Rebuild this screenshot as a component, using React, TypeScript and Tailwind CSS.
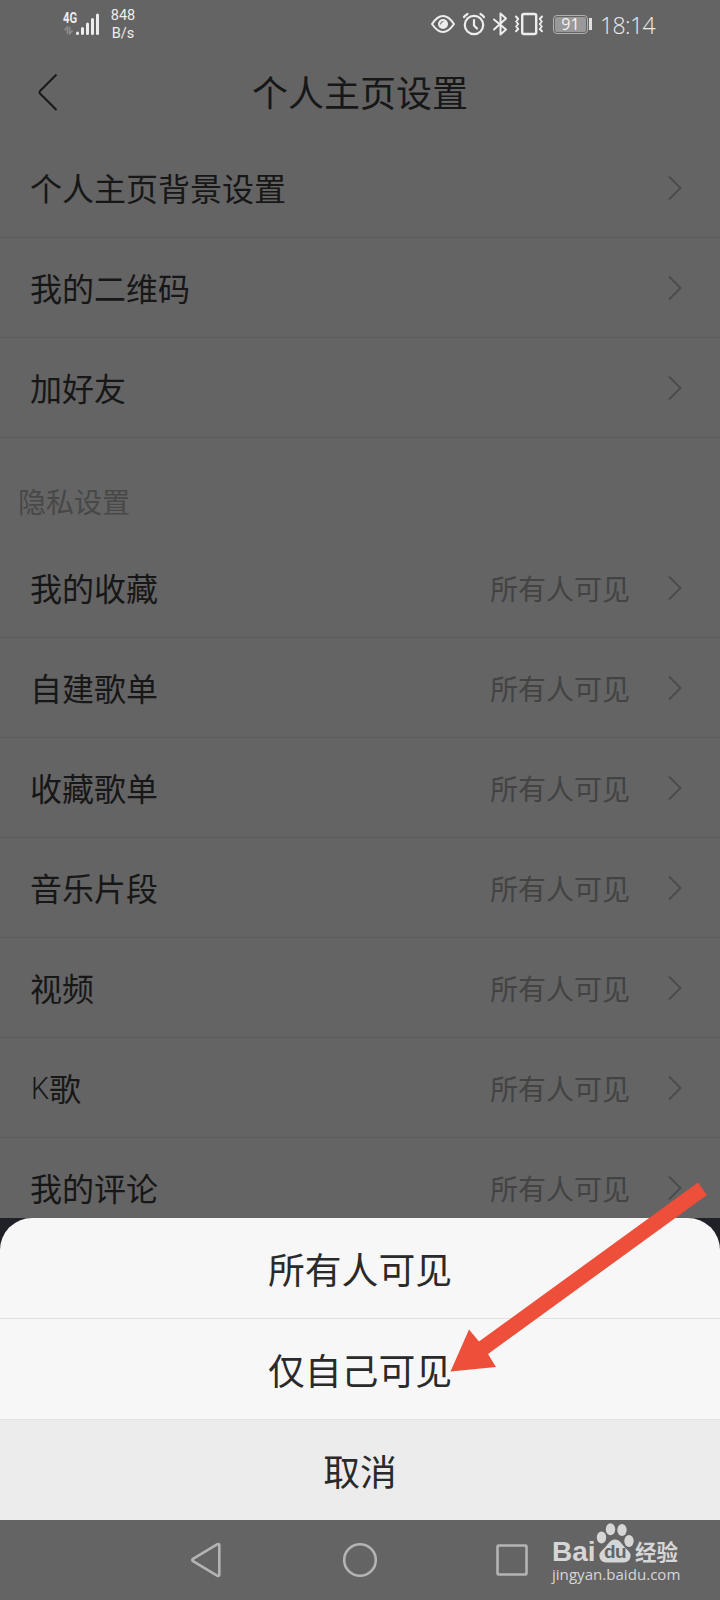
const Chevron = () => (
  <svg className="h-[26px] w-[14px] shrink-0" viewBox="0 0 14 26" fill="none" stroke="#4b4b4b" strokeWidth="1.9">
    <path d="M1 1.5 12.5 13 1 24.5" />
  </svg>
);

const Row = ({ label, value }: { label: string; value?: string }) => (
  <div className="flex h-[100px] shrink-0 items-center border-b border-[#5b5b5b] pr-[38px] pl-[30px]">
    <span className="flex grow items-center pb-[2px] text-[32px] leading-[48px] text-[#171717]">
      {label.startsWith("K") ? (
        <>
          <span className="ml-[1px] inline-block w-[18px] origin-left scale-x-90 pt-[2px] font-['Roboto'] font-light">K</span>
          <span>{label.slice(1)}</span>
        </>
      ) : (
        label
      )}
    </span>
    {value && <span className="mr-[38px] pt-[1px] text-[28px] leading-[40px] text-[#434343]">{value}</span>}
    <Chevron />
  </div>
);

const StatusBar = () => (
  <div className="flex h-12 shrink-0 items-center pr-[64px] pl-[63px] text-[#ededed]">
    <div className="flex h-[24px] w-[38px] gap-0">
      <div className="flex w-[13px] flex-col">
        <span className="w-[13px] origin-left scale-x-[.8] font-['Roboto'] text-[14px] leading-[12px] font-bold">4G</span>
        <svg className="mt-[2px] h-[9px] w-[11px]" viewBox="0 0 11 10" fill="none" stroke="#8c8c8c" strokeWidth="1.8">
          <path d="M4.3 9V1.2L1 4.5M6.8.8V8.5L10 5" />
        </svg>
      </div>
      <svg className="h-[24px] w-[24px]" viewBox="0 0 24 24" stroke="currentColor" strokeWidth="3" strokeLinecap="round">
        <path d="M1.5 21v.5M6.5 16.5v5M11.5 12v9.5M16.5 7.5v14M21.5 3v18.5" />
      </svg>
    </div>
    <div className="ml-[9px] w-[26px] pt-[2px] text-center font-['Roboto'] text-[14.5px] leading-[18px]">
      <div>848</div>
      <div>B/s</div>
    </div>
    <div className="grow" />
    <svg className="h-[24px] w-[114px]" viewBox="430 12 114 24" fill="none" stroke="currentColor" strokeWidth="2" strokeLinecap="round" strokeLinejoin="round">
      <path d="M432 24C436 18 439 16 443 16S450 18 454 24C450 30 447 32 443 32S436 30 432 24Z" />
      <circle cx="443" cy="24" r="5" fill="currentColor" stroke="none" />
      <path d="M440.5 24a2.5 2.5 0 0 1 2.5-2.5" stroke="#646464" strokeWidth="1" />
      <circle cx="474" cy="25" r="9.2" strokeWidth="2.2" />
      <path d="M474 20v5.5l3 3M464 17a10 10 0 0 1 3.5-3M484 17a10 10 0 0 0-3.5-3" strokeWidth="2.2" />
      <path d="M494 19.5 506 29.5 500.5 34.5V13.5L506 18.5 494 29.5" />
      <rect x="522.2" y="14" width="14" height="20" rx="1.8" strokeWidth="2.4" />
      <path d="M516 16.5l2.2 2.5-2 2.5 2 2.5-2 2.5 2 2.5-2.2 2.2M542 16.5l-2.2 2.5 2 2.5-2 2.5 2 2.5-2 2.5 2.2 2.2" strokeWidth="2" />
    </svg>
    <div className="ml-[9px] flex h-[19px] w-[35px] rounded-[4px] border-[1.5px] border-[#b0b0b0] p-[1px]">
      <div className="flex grow items-center justify-center rounded-[2px] bg-[#999] font-['Open_Sans'] text-[16px] leading-[15px] text-[#f2f2f2]">91</div>
    </div>
    <div className="ml-[1px] h-[12px] w-[3px] bg-[#e0e0e0]" />
    <div className="ml-[8px] w-[56px] pt-[1px] font-['Open_Sans'] text-[23px] leading-[30px] font-light tracking-[-0.6px] whitespace-nowrap">18:14</div>
  </div>
);

const Option = ({ label, cls }: { label: string; cls: string }) => (
  <button className={"flex items-center justify-center text-[36.8px] leading-[50px] text-[#2a2a2a] " + cls}>{label}</button>
);

const privacy = ["我的收藏", "自建歌单", "收藏歌单", "音乐片段", "视频", "K歌", "我的评论"];

export default function App() {
  return (
    <div className="relative flex h-[1600px] w-[720px] flex-col overflow-hidden bg-[#646464] font-['Noto_Sans_CJK_SC',sans-serif]">
      <StatusBar />
      <header className="grid h-[90px] shrink-0 grid-cols-[1fr_auto_1fr] items-center">
        <svg className="ml-[38px] h-[38px] w-[20px]" viewBox="0 0 20 38" fill="none" stroke="#171717" strokeWidth="1.9" strokeLinejoin="round">
          <path d="M18.5 .5 2 17Q1 18.2 2 19.5L18.5 36" />
        </svg>
        <h1 className="pb-[4px] text-[36px] leading-[50px] text-[#171717]">个人主页设置</h1>
      </header>
      <main className="flex h-[1080px] shrink-0 flex-col overflow-hidden">
        <Row label="个人主页背景设置" />
        <Row label="我的二维码" />
        <Row label="加好友" />
        <div className="flex h-[100px] shrink-0 items-center pt-[26px] pl-[18px] text-[28px] leading-[40px] text-[#484848]">隐私设置</div>
        {privacy.map((label) => (
          <Row key={label} label={label} value="所有人可见" />
        ))}
      </main>
      <div className="shrink-0 bg-[#1f2127]">
        <div className="flex h-[302px] flex-col overflow-hidden rounded-t-[32px] bg-[#f7f7f7]">
          <Option label="所有人可见" cls="h-[101px] border-b border-[#e0e0e0]" />
          <Option label="仅自己可见" cls="h-[101px] border-b border-[#e2e2e2]" />
          <Option label="取消" cls="h-[100px] bg-[#ececec]" />
        </div>
      </div>
      <nav className="flex h-[80px] shrink-0 items-center pl-[190px]">
        <svg className="h-[36px] w-[340px]" viewBox="190 1542 340 36" fill="none" stroke="#b4b4b4" strokeWidth="2.6" strokeLinejoin="round">
          <path d="M193 1558.8 217.5 1544.2Q219.3 1543.5 219.3 1545.2V1574.8Q219.3 1576.5 217.5 1575.8L193 1561.2Q191.5 1560 193 1558.8Z" />
          <circle cx="360" cy="1560" r="15.8" />
          <rect x="497.5" y="1545.5" width="29" height="29" rx="1" />
        </svg>
        <div className="mt-[3px] ml-[22px] flex w-[132px] shrink-0 flex-col self-start text-[#d6d6d6]">
          <div className="flex h-[42px] items-start">
            <span className="mt-[16px] w-[44px] font-['Liberation_Sans'] text-[28px] leading-[26px] font-bold">Bai</span>
            <div className="relative h-[42px] w-[38px]">
              <svg className="h-[42px] w-[38px]" viewBox="0 0 38 42" fill="currentColor">
                <ellipse cx="5.5" cy="14.5" rx="4.7" ry="6" />
                <ellipse cx="14.5" cy="6.2" rx="4.7" ry="6" />
                <ellipse cx="26" cy="7" rx="4.7" ry="6" />
                <ellipse cx="33" cy="18" rx="4.7" ry="6" />
                <path d="M19 16.5c5 0 6 4 10 8 4 4 7 6 5 11-2 5-8 4-15 4s-13 1-15-4c-2-5 1-7 5-11 4-4 5-8 10-8Z" />
              </svg>
              <span className="absolute top-[19px] left-[8px] font-['Liberation_Sans'] text-[19px] leading-[20px] font-bold tracking-[-0.5px] text-[#646464]">du</span>
            </div>
            <span className="mt-[16px] ml-[1px] text-[21.5px] leading-[24px] font-bold">经验</span>
          </div>
          <span className="font-['Open_Sans'] text-[15.1px] leading-[18px] font-medium whitespace-nowrap">jingyan.baidu.com</span>
        </div>
      </nav>
      <svg className="pointer-events-none absolute top-[1180px] left-[448px] h-[194px] w-[262px]" viewBox="448 1180 262 194">
        <path d="M698 1182.5 707 1195 488 1354 496 1367 450.5 1371.5 469 1329.5 479 1341.5Z" fill="#ed4f3a" />
      </svg>
    </div>
  );
}
